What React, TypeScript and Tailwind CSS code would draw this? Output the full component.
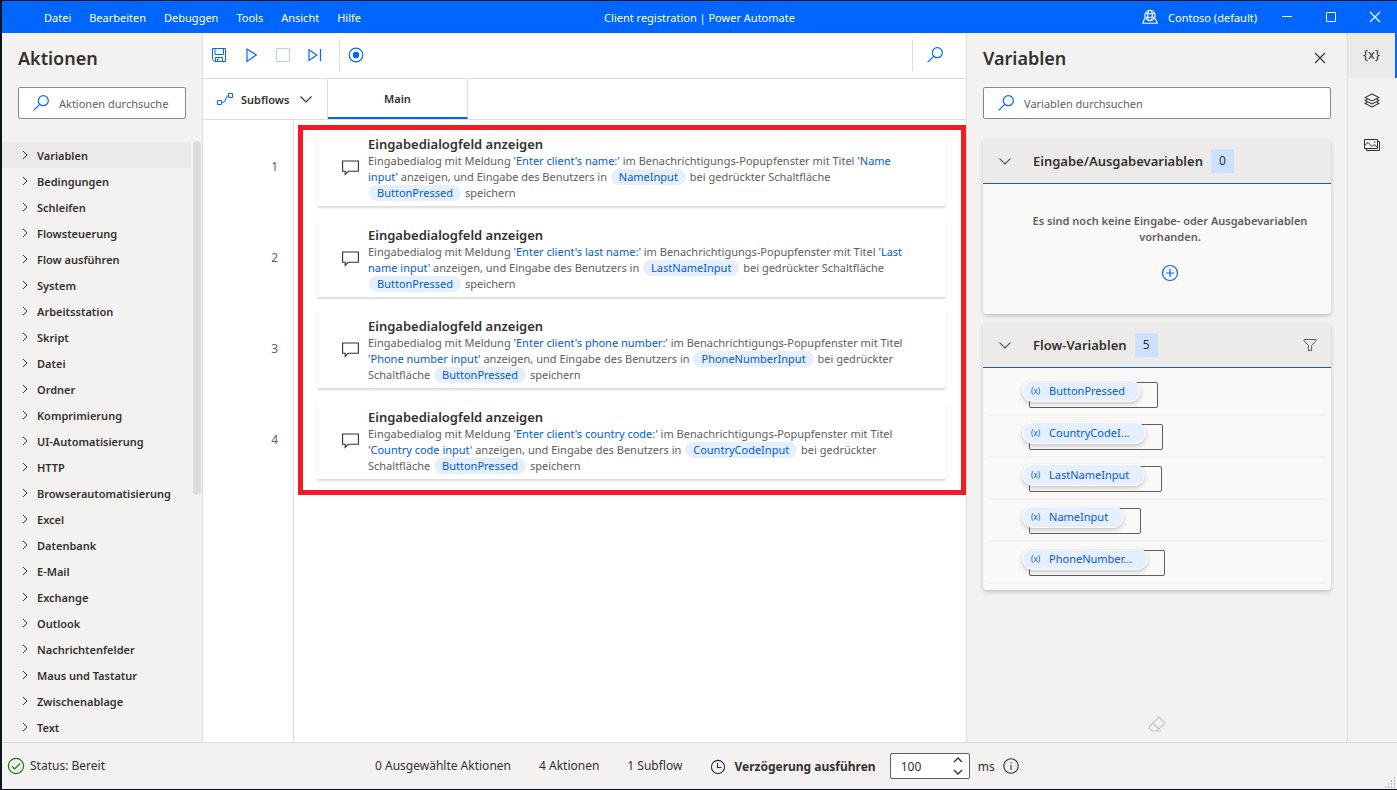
import React, { useState } from "react";

type Part = { kind: "text" | "value" | "variable"; text: string };
type FlowStep = { id: number; title: string; lines: Part[][] };

const MENU = ["Datei", "Bearbeiten", "Debuggen", "Tools", "Ansicht", "Hilfe"];

const ACTION_GROUPS = [
  "Variablen",
  "Bedingungen",
  "Schleifen",
  "Flowsteuerung",
  "Flow ausführen",
  "System",
  "Arbeitsstation",
  "Skript",
  "Datei",
  "Ordner",
  "Komprimierung",
  "UI-Automatisierung",
  "HTTP",
  "Browserautomatisierung",
  "Excel",
  "Datenbank",
  "E-Mail",
  "Exchange",
  "Outlook",
  "Nachrichtenfelder",
  "Maus und Tastatur",
  "Zwischenablage",
  "Text",
];

const FLOW_VARIABLES = [
  "ButtonPressed",
  "CountryCodeI...",
  "LastNameInput",
  "NameInput",
  "PhoneNumber...",
];

const t = (text: string): Part => ({ kind: "text", text });
const v = (text: string): Part => ({ kind: "value", text });
const x = (text: string): Part => ({ kind: "variable", text });

const STEPS: FlowStep[] = [
  {
    id: 1,
    title: "Eingabedialogfeld anzeigen",
    lines: [
      [t("Eingabedialog mit Meldung "), v("'Enter client's name:'"), t(" im Benachrichtigungs-Popupfenster mit Titel "), v("'Name")],
      [v("input'"), t(" anzeigen, und Eingabe des Benutzers in "), x("NameInput"), t(" bei gedrückter Schaltfläche")],
      [x("ButtonPressed"), t(" speichern")],
    ],
  },
  {
    id: 2,
    title: "Eingabedialogfeld anzeigen",
    lines: [
      [t("Eingabedialog mit Meldung "), v("'Enter client's last name:'"), t(" im Benachrichtigungs-Popupfenster mit Titel "), v("'Last")],
      [v("name input'"), t(" anzeigen, und Eingabe des Benutzers in "), x("LastNameInput"), t(" bei gedrückter Schaltfläche")],
      [x("ButtonPressed"), t(" speichern")],
    ],
  },
  {
    id: 3,
    title: "Eingabedialogfeld anzeigen",
    lines: [
      [t("Eingabedialog mit Meldung "), v("'Enter client's phone number:'"), t(" im Benachrichtigungs-Popupfenster mit Titel")],
      [v("'Phone number input'"), t(" anzeigen, und Eingabe des Benutzers in "), x("PhoneNumberInput"), t(" bei gedrückter")],
      [t("Schaltfläche "), x("ButtonPressed"), t(" speichern")],
    ],
  },
  {
    id: 4,
    title: "Eingabedialogfeld anzeigen",
    lines: [
      [t("Eingabedialog mit Meldung "), v("'Enter client's country code:'"), t(" im Benachrichtigungs-Popupfenster mit Titel")],
      [v("'Country code input'"), t(" anzeigen, und Eingabe des Benutzers in "), x("CountryCodeInput"), t(" bei gedrückter")],
      [t("Schaltfläche "), x("ButtonPressed"), t(" speichern")],
    ],
  },
];

const svgProps = {
  fill: "none",
  stroke: "currentColor",
  "aria-hidden": true,
} as const;

const SearchIcon = () => (
  <svg {...svgProps} className="size-4 shrink-0 text-[#0066ff]" viewBox="0 0 16 16" strokeWidth="1.2">
    <circle cx="10.3" cy="5.7" r="5" />
    <path d="M6.7 9.3 0.6 15.4" />
  </svg>
);

const CloseIcon = ({ className }: { className: string }) => (
  <svg {...svgProps} className={className} viewBox="0 0 12 12" strokeWidth="1.1">
    <path d="M1 1l10 10M11 1 1 11" />
  </svg>
);

const ChevronDownIcon = ({ className }: { className: string }) => (
  <svg {...svgProps} className={className} viewBox="0 0 14 14" strokeWidth="1.1">
    <path d="M1.5 4.5 7 10l5.500-5.500" />
  </svg>
);

const ChevronRightIcon = () => (
  <svg {...svgProps} className="size-3" viewBox="0 0 12 12" strokeWidth="1">
    <path d="M4 2l4 4-4 4" />
  </svg>
);

const SearchBox = ({ id, label }: { id: string; label: string }) => (
  <div className="flex h-8 items-center gap-2.5 rounded-[2px] border border-[#8a8886] bg-white pr-4 pl-3.5">
    <SearchIcon />
    <input
      id={id}
      aria-label={label}
      placeholder={label}
      className="min-w-0 flex-1 bg-transparent pt-0.5 text-[11px] text-[#323130] outline-none placeholder:text-[#605e5c] placeholder:opacity-100"
    />
  </div>
);

const TitleBar = () => (
  <header className="grid h-8 shrink-0 grid-cols-[1fr_auto_1fr] items-center bg-[#0066ff] text-[11px] text-white">
    <nav className="flex gap-[18px] pt-0.5 pl-[42px]">
      {MENU.map((item) => (
        <button key={item}>{item}</button>
      ))}
    </nav>
    <h1 className="pt-0.5">Client registration | Power Automate</h1>
    <div className="flex items-center justify-end pr-4">
      <svg {...svgProps} className="mr-2.5 size-4" viewBox="0 0 16 16" strokeWidth="1.1">
        <circle cx="8" cy="6.500" r="5.200" />
        <ellipse cx="8" cy="6.500" rx="2.300" ry="5.200" />
        <path d="M3.300 4.700h9.400M3 8.300h10M2.600 9.500 0.800 14.200h14.400l-1.800-4.700" />
      </svg>
      <span className="mr-6 pt-0.5">Contoso (default)</span>
      <button aria-label="Minimieren" className="mr-8">
        <svg {...svgProps} className="size-3" viewBox="0 0 12 12">
          <path d="M1 5.5h10" />
        </svg>
      </button>
      <button aria-label="Maximieren" className="mr-8">
        <svg {...svgProps} className="size-3" viewBox="0 0 12 12">
          <path d="M1.5 1.5h9v9h-9z" />
        </svg>
      </button>
      <button aria-label="Schließen">
        <CloseIcon className="size-3" />
      </button>
    </div>
  </header>
);

const ActionsPanel = () => (
  <aside className="flex w-[201px] shrink-0 flex-col border-r border-[#dedddc]">
    <h2 className="mt-[11px] mb-[15px] pl-4 text-[18px] leading-7 font-semibold">Aktionen</h2>
    <div className="pr-4 pl-4">
      <SearchBox id="action-search" label="Aktionen durchsuchen" />
    </div>
    <div className="mt-[22px] flex min-h-0 flex-1 items-start justify-between overflow-hidden">
      <ul className="w-[189px] pt-px">
        {ACTION_GROUPS.map((group, index) => (
          <li key={group}>
            <button
              className={
                index === 0
                  ? "flex h-[26px] w-full items-center gap-1.5 bg-[#ebeae9] pl-[17px]"
                  : "flex h-[26px] w-full items-center gap-1.5 pl-[17px]"
              }
            >
              <ChevronRightIcon />
              <span className="pt-0.5 text-[11px] font-semibold">{group}</span>
            </button>
          </li>
        ))}
      </ul>
      <div className="mr-px h-[354px] w-2 rounded-sm bg-[#dddcdb]" />
    </div>
  </aside>
);

const Toolbar = () => (
  <div className="flex h-[46px] shrink-0 items-center border-b border-[#dedddc] pr-[23px] pb-0.5 pl-2 text-[#0066ff]">
    <button aria-label="Speichern" className="mr-4">
      <svg {...svgProps} className="size-4" viewBox="0 0 16 16">
        <path d="M1.5 1.5h13v13h-11l-2-2zM4 1.5v6h8.5v-6M4.5 14.5v-4h7v4M6.5 14.5v-2.5h1.5" />
      </svg>
    </button>
    <button aria-label="Ausführen" className="mr-4">
      <svg {...svgProps} className="size-4" viewBox="0 0 16 16" strokeWidth="1.2">
        <path d="M4 2v12.4L13.3 8z" />
      </svg>
    </button>
    <button aria-label="Beenden" disabled className="mr-4 opacity-30">
      <svg {...svgProps} className="size-4" viewBox="0 0 16 16">
        <path d="M1.5 1.5h13v13h-13z" />
      </svg>
    </button>
    <button aria-label="Nächste Aktion ausführen" className="mr-4">
      <svg {...svgProps} className="size-4" viewBox="0 0 16 16" strokeWidth="1.2">
        <path d="M2 2.8v10.6L9.8 8zM13.5 2v12" />
      </svg>
    </button>
    <div className="mr-2 h-8 w-px bg-[#dedddc]" />
    <button aria-label="Rekorder">
      <svg {...svgProps} className="size-4" viewBox="0 0 16 16" strokeWidth="1.2">
        <circle cx="8" cy="8" r="6.8" />
        <circle cx="8" cy="8" r="3.2" fill="currentColor" stroke="none" />
      </svg>
    </button>
    <div className="mr-3.5 ml-auto h-8 w-px bg-[#dedddc]" />
    <button aria-label="Suchen">
      <SearchIcon />
    </button>
  </div>
);

const Tabs = () => (
  <div className="flex h-[41px] shrink-0 border-b border-[#dedddc] text-[11px] font-semibold">
    <button className="flex w-[125px] items-center border-r border-[#dedddc] pl-3.5">
      <svg {...svgProps} className="mr-2 size-4 text-[#0066ff]" viewBox="0 0 16 16">
        <path d="M0.5 9.5h4v4h-4zM11.5 2.5h4v4h-4zM4.5 11.5h1.3c1 0 1.5-.4 1.9-1.3l2.1-4.4c.4-.9.9-1.3 1.7-1.3" />
      </svg>
      <span className="pt-0.5">Subflows</span>
      <ChevronDownIcon className="ml-2.5 size-3.5" />
    </button>
    <button className="h-10 w-[140px] border-r border-b-2 border-r-[#dedddc] border-b-[#0066ff] pt-0.5">Main</button>
  </div>
);

const StepLine = ({ parts }: { parts: Part[] }) => (
  <span className="block h-4 whitespace-pre">
    {parts.map((part, index) => {
      if (part.kind === "variable") {
        return (
          <span key={index} className="mx-px inline-block h-4 rounded-full bg-[#e5efff] px-2 text-[#005ae6]">
            {part.text}
          </span>
        );
      }
      return (
        <span key={index} className={part.kind === "value" ? "text-[#005ae6]" : ""}>
          {part.text}
        </span>
      );
    })}
  </span>
);

const StepCard = ({ step }: { step: FlowStep }) => (
  <li className="flex h-[78px] items-center gap-[9px] rounded-[2px] bg-white pl-[25px] shadow-[0_2px_2px_rgba(0,0,0,0.14)]">
    <svg {...svgProps} className="size-[17px] shrink-0" viewBox="0 0 17 17" strokeWidth="1.1">
      <path d="M0.6 2h15.800v10.300H6.200l-3 3v-3H0.600z" />
    </svg>
    <div className="pt-0.5">
      <h3 className="text-[13px] leading-[18px] font-semibold">{step.title}</h3>
      <p className="text-[11px] leading-4 text-[#605e5c]">
        {step.lines.map((line, index) => (
          <StepLine key={index} parts={line} />
        ))}
      </p>
    </div>
  </li>
);

const Workspace = () => (
  <main className="flex min-w-0 flex-1 flex-col border-r border-[#dedddc] bg-white">
    <Toolbar />
    <Tabs />
    <div className="flex min-h-0 flex-1">
      <ol className="flex w-[91px] shrink-0 flex-col gap-[13px] border-r border-[#dedddc] pt-2 pr-[15px]">
        {STEPS.map((step) => (
          <li key={step.id} className="flex h-[78px] items-center justify-end text-[12px] text-[#605e5c]">
            {step.id}
          </li>
        ))}
      </ol>
      <div className="min-w-0 flex-1">
        <div className="relative pt-2 pr-5 pb-4 pl-[23px]">
          <ul className="flex flex-col gap-[13px]">
            {STEPS.map((step) => (
              <StepCard key={step.id} step={step} />
            ))}
          </ul>
          <div className="pointer-events-none absolute top-[5px] right-0 bottom-0 left-1 border-5 border-[#ee1c24]" />
        </div>
      </div>
    </div>
  </main>
);

const VariableSection = ({
  title,
  count,
  filter,
  children,
}: {
  title: string;
  count: number;
  filter?: boolean;
  children: React.ReactNode;
}) => (
  <section className="overflow-hidden rounded-[4px] bg-[#faf9f8] shadow-[0_2px_4px_rgba(0,0,0,0.2)]">
    <div className="flex h-[45px] items-center border-b border-[#0f5bd7] bg-[#edebe9] pr-3.5 pl-[15px]">
      <ChevronDownIcon className="mr-[21px] size-3.5 text-[#605e5c]" />
      <h3 className="pt-0.5 text-[13px] font-semibold">{title}</h3>
      <span className="ml-2 flex h-6 w-[23px] items-center justify-center bg-[#cce0ff] text-[12px]">{count}</span>
      {filter && (
        <button aria-label="Filtern" className="ml-auto">
          <svg {...svgProps} className="size-3.5 text-[#605e5c]" viewBox="0 0 14 14">
            <path d="M1 1.5h12v1.2L8.6 7.4v5.1H5.4V7.4L1 2.7z" />
          </svg>
        </button>
      )}
    </div>
    {children}
  </section>
);

const VariablesPanel = () => (
  <aside className="flex w-[381px] shrink-0 flex-col border-r border-[#dedddc] px-4">
    <div className="mt-[11px] mb-[15px] flex items-center justify-between pr-[5px]">
      <h2 className="text-[18px] leading-7 font-semibold">Variablen</h2>
      <button aria-label="Bereich schließen">
        <CloseIcon className="size-3" />
      </button>
    </div>
    <SearchBox id="variable-search" label="Variablen durchsuchen" />
    <div className="mt-5 flex flex-col gap-[9px]">
      <VariableSection title="Eingabe/Ausgabevariablen" count={0}>
        <div className="flex h-[130px] flex-col items-center pt-[29px] pl-[26px]">
          <p className="text-center text-[11px] leading-4 font-semibold text-[#605e5c]">
            Es sind noch keine Eingabe- oder Ausgabevariablen
            <br />
            vorhanden.
          </p>
          <button aria-label="Variable hinzufügen" className="mt-[19px] text-[#0066ff]">
            <svg {...svgProps} className="size-[18px]" viewBox="0 0 18 18" strokeWidth="1.2">
              <circle cx="9" cy="9" r="7.5" />
              <path d="M9 5v8M5 9h8" />
            </svg>
          </button>
        </div>
      </VariableSection>
      <VariableSection title="Flow-Variablen" count={5} filter>
        <ul className="px-1 pt-1.5 pb-1.5">
          {FLOW_VARIABLES.map((name) => (
            <li key={name} className="flex h-[42px] items-start border-b-2 border-[#f3f2f1] pt-1.5 pl-[35px]">
              <div className="relative isolate">
                <span className="absolute top-0.5 -right-[17px] left-[7px] -z-10 h-[26px] rounded-[2px] border border-[#605e5c]" />
                <button className="flex h-[22px] items-center gap-[9px] rounded-full border border-white bg-[#e5efff] pr-[15px] pl-2 text-[#005ae6] shadow-[0_2px_4px_rgba(0,0,0,0.2)]">
                  <span className="text-[8px]">(x)</span>
                  <span className="text-[11px]">{name}</span>
                </button>
              </div>
            </li>
          ))}
        </ul>
      </VariableSection>
    </div>
    <button aria-label="Auswahl löschen" disabled className="mt-auto mb-[9px] self-center text-[#c8c6c4]">
      <svg {...svgProps} className="size-[18px]" viewBox="0 0 18 18" strokeWidth="1.2">
        <path d="M1.5 11.5 11 2l6 6-8 8H4l-2.5-2.5zM5 8l6 6M4 16h9" />
      </svg>
    </button>
  </aside>
);

const SideStrip = () => (
  <nav className="w-[49px] shrink-0 text-[#323130]">
    <button
      aria-label="Variablen"
      className="flex h-[45px] w-full items-center justify-center border-r-2 border-[#0066ff] bg-[#ebeae9] pb-0.5 text-[13px]"
    >
      {"{x}"}
    </button>
    <button
      aria-label="Benutzeroberflächenelemente"
      className="flex h-[45px] w-full items-center justify-center pr-0.5"
    >
      <svg {...svgProps} className="size-4" viewBox="0 0 16 16" strokeWidth="1.1">
        <path d="M8 1l7 3.5-7 3.5-7-3.5zM3.3 6.2 1 7.5 8 11l7-3.5-2.3-1.3M3.3 9.2 1 10.5 8 14l7-3.5-2.3-1.3" />
      </svg>
    </button>
    <button aria-label="Bilder" className="flex h-[45px] w-full items-center justify-center pr-0.5 pb-0.5">
      <svg {...svgProps} className="size-4" viewBox="0 0 16 16">
        <path d="M0.5 2.5h13v9H0.5zM13.5 4.5h2v9H2.5v-2M0.5 8.5 4 5.5l4 4 2-2 3.5 3M10 5h1.5" />
      </svg>
    </button>
  </nav>
);

const StatusBar = () => {
  const [delay, setDelay] = useState(100);

  return (
    <footer className="flex h-[47px] shrink-0 items-center border-t border-[#dedddc] pl-[5px] text-[12px]">
      <div className="flex w-[368px] items-center gap-[5px]">
        <svg {...svgProps} className="size-[18px] text-[#107c10]" viewBox="0 0 18 18" strokeWidth="1.2">
          <circle cx="9" cy="9" r="7.6" />
          <path d="M5 9.3 7.7 12l5.3-5.5" />
        </svg>
        <span>Status: Bereit</span>
      </div>
      <div className="flex items-center gap-7">
        <span>0 Ausgewählte Aktionen</span>
        <span>4 Aktionen</span>
        <span>1 Subflow</span>
        <label htmlFor="delay" className="flex items-center gap-2 pt-0.5 font-bold">
          <svg {...svgProps} className="size-4" viewBox="0 0 16 16" strokeWidth="1.1">
            <circle cx="8" cy="8" r="6.6" />
            <path d="M7.5 4v4.5h4" />
          </svg>
          Verzögerung ausführen
        </label>
      </div>
      <div className="ml-3.5 flex h-[26px] w-20 items-center rounded-[2px] border border-[#605e5c] bg-white pr-1.5 pl-2.5">
        <input
          id="delay"
          value={delay}
          onChange={(e) => setDelay(Number(e.target.value) || 0)}
          className="min-w-0 flex-1 bg-transparent pt-0.5 outline-none"
        />
        <div className="flex flex-col gap-1.5">
          <button aria-label="Erhöhen" onClick={() => setDelay(delay + 100)}>
            <svg {...svgProps} className="h-1.5 w-2.5" viewBox="0 0 10 6" strokeWidth="1.4">
              <path d="M1 5l4-4 4 4" />
            </svg>
          </button>
          <button aria-label="Verringern" onClick={() => setDelay(Math.max(0, delay - 100))}>
            <svg {...svgProps} className="h-1.5 w-2.5" viewBox="0 0 10 6" strokeWidth="1.4">
              <path d="M1 1l4 4 4-4" />
            </svg>
          </button>
        </div>
      </div>
      <span className="mx-2 pt-0.5">ms</span>
      <svg {...svgProps} className="size-4" viewBox="0 0 16 16" strokeWidth="1.1">
        <circle cx="8" cy="8" r="7.2" />
        <path d="M8 7v5M8 4.3v1.3" />
      </svg>
      <svg className="mt-auto ml-auto size-3 text-[#a9b4d0]" viewBox="0 0 12 12" fill="currentColor" aria-hidden>
        <path d="M9 0h1v2H9zM6 3h1v2H6zM9 3h1v2H9zM3 6h1v2H3zM6 6h1v2H6zM9 6h1v2H9zM0 9h1v2H0zM3 9h1v2H3zM6 9h1v2H6zM9 9h1v2H9z" />
      </svg>
    </footer>
  );
};

const App: React.FC = () => (
  <div className="h-screen bg-[#0b1420] pt-px pb-px pl-0.5 font-['Noto_Sans',sans-serif] text-[#323130]">
    <div className="flex h-full flex-col overflow-hidden bg-[#f3f2f1]">
      <TitleBar />
      <div className="flex min-h-0 flex-1">
        <ActionsPanel />
        <Workspace />
        <VariablesPanel />
        <SideStrip />
      </div>
      <StatusBar />
    </div>
  </div>
);

export default App;
